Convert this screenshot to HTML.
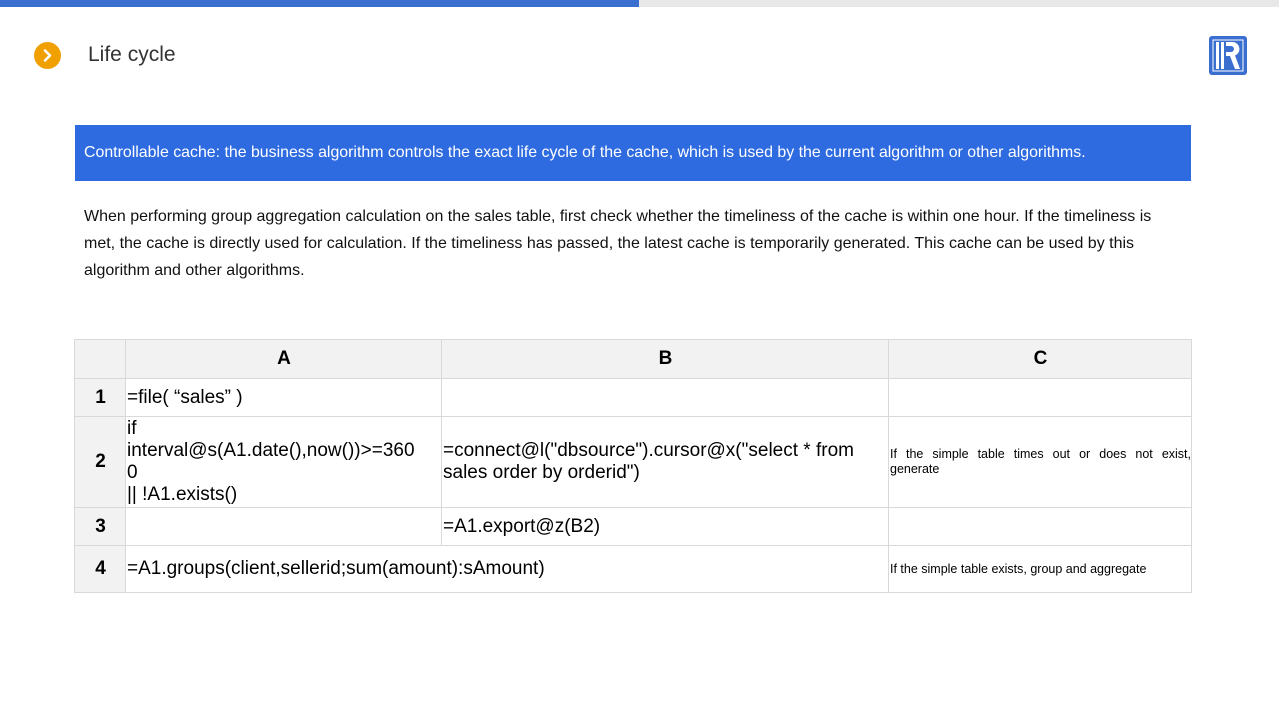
<!DOCTYPE html>
<html><head><style>
body{margin:0;width:1279px;height:720px;background:#fff;position:relative;overflow:hidden;font-family:"Liberation Sans",sans-serif;color:#000}
.a{position:absolute}
.c{position:absolute;box-sizing:border-box;border:1px solid #d9d9d9;font-size:19px;line-height:22px;padding-left:1px;display:flex;align-items:center}
.h{background:#f2f2f2;justify-content:center;font-weight:bold;font-size:19px}
.s{font-size:12.5px;line-height:15px}
</style></head><body>
<div class="a" style="left:0;top:0;width:639px;height:7px;background:#3a6fd0"></div>
<div class="a" style="left:639px;top:0;width:640px;height:7px;background:#e8e8e8"></div>
<div class="a" style="left:34px;top:42px;width:27px;height:27px;border-radius:50%;background:#f0a000"></div>
<svg class="a" style="left:34px;top:42px" width="27" height="27"><path d="M11 8.5l5 5-5 5" stroke="#fff" stroke-width="2.6" fill="none" stroke-linecap="round" stroke-linejoin="round"/></svg>
<div class="a" style="left:88px;top:43px;font-size:21px;color:#333">Life cycle</div>
<svg class="a" style="left:1208px;top:35px" width="40" height="41"><rect x="1" y="1" width="38" height="39" rx="3" fill="#3a6fd0"/><rect x="5" y="5" width="30" height="31" fill="none" stroke="#fff" stroke-width="1"/><rect x="8" y="7" width="3" height="27" fill="#fff"/><rect x="13" y="7" width="3" height="27" fill="#fff"/><path d="M18 7h7a7 7 0 0 1 2 13.5l5 13.5h-5l-5-13h-4v-4h5a3 3 0 0 0 0-6h-5z" fill="#fff"/></svg>
<div class="a" style="left:75px;top:125px;width:1116px;height:56px;background:#2f6be0;color:#fff;font-size:15.9px;line-height:56px;padding-left:9px;box-sizing:border-box">Controllable cache: the business algorithm controls the exact life cycle of the cache, which is used by the current algorithm or other algorithms.</div>
<div class="a" style="left:84px;top:203px;width:1090px;font-size:16px;line-height:27px;color:#111">When performing group aggregation calculation on the sales table, first check whether the timeliness of the cache is within one hour. If the timeliness is met, the cache is directly used for calculation. If the timeliness has passed, the latest cache is temporarily generated. This cache can be used by this algorithm and other algorithms.</div>

<div class="c h" style="left:74px;top:339px;width:52px;height:40px"></div>
<div class="c h" style="left:125px;top:339px;width:317px;height:40px">A</div>
<div class="c h" style="left:441px;top:339px;width:448px;height:40px">B</div>
<div class="c h" style="left:888px;top:339px;width:304px;height:40px">C</div>

<div class="c h" style="left:74px;top:378px;width:52px;height:39px">1</div>
<div class="c" style="left:125px;top:378px;width:317px;height:39px">=file( “sales” )</div>
<div class="c" style="left:441px;top:378px;width:448px;height:39px"></div>
<div class="c" style="left:888px;top:378px;width:304px;height:39px"></div>

<div class="c h" style="left:74px;top:416px;width:52px;height:92px">2</div>
<div class="c" style="left:125px;top:416px;width:317px;height:92px;line-height:22px">if<br>interval@s(A1.date(),now())>=360<br>0<br>|| !A1.exists()</div>
<div class="c" style="left:441px;top:416px;width:448px;height:92px">=connect@l("dbsource").cursor@x("select * from sales order by orderid")</div>
<div class="c s" style="left:888px;top:416px;width:304px;height:92px;text-align:justify">If the simple table times out or does not exist, generate</div>

<div class="c h" style="left:74px;top:507px;width:52px;height:39px">3</div>
<div class="c" style="left:125px;top:507px;width:317px;height:39px"></div>
<div class="c" style="left:441px;top:507px;width:448px;height:39px">=A1.export@z(B2)</div>
<div class="c" style="left:888px;top:507px;width:304px;height:39px"></div>

<div class="c h" style="left:74px;top:545px;width:52px;height:48px">4</div>
<div class="c" style="left:125px;top:545px;width:764px;height:48px">=A1.groups(client,sellerid;sum(amount):sAmount)</div>
<div class="c s" style="left:888px;top:545px;width:304px;height:48px">If the simple table exists, group and aggregate</div>
</body></html>
